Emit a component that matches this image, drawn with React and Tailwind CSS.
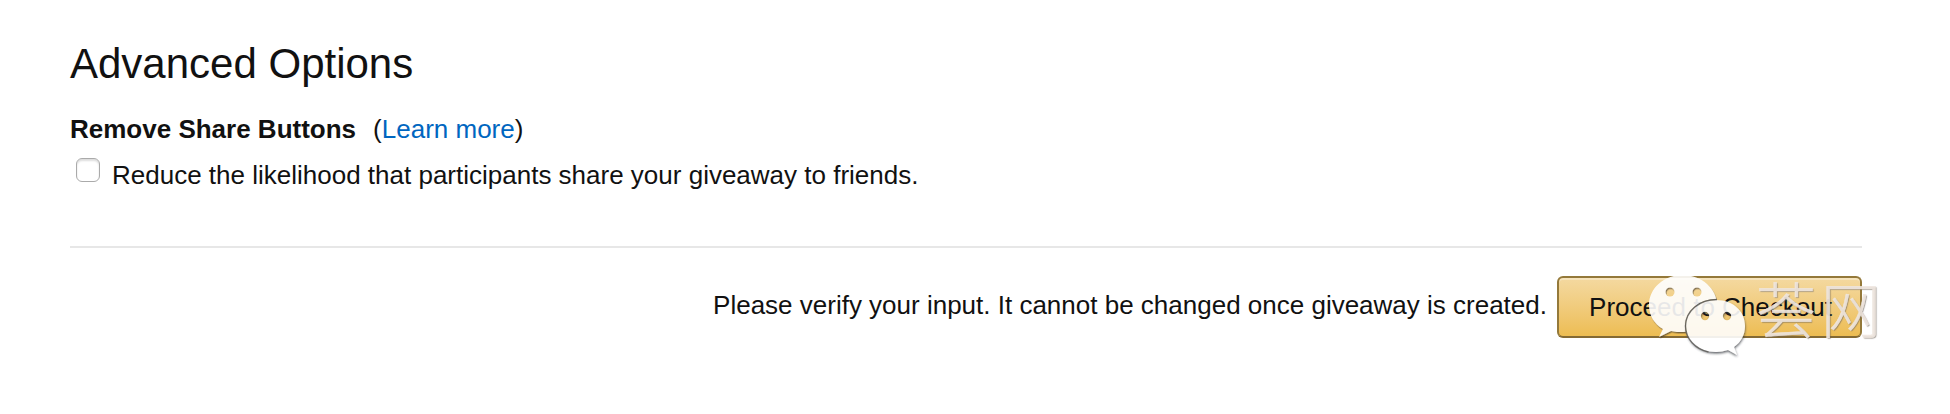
const EYES = [
  { cx: 1670, cy: 292 },
  { cx: 1697, cy: 292 },
  { cx: 1705, cy: 316 },
  { cx: 1727, cy: 316 },
];

function ChatBubbles() {
  return (
    <svg className="block" width="110" height="100" viewBox="1640 265 110 100" fill="none">
      <defs>
        <mask id="back">
          <rect x="1640" y="265" width="110" height="100" fill="white" />
          <circle cx={EYES[0].cx} cy={EYES[0].cy} r="4.5" fill="black" />
          <circle cx={EYES[1].cx} cy={EYES[1].cy} r="4.5" fill="black" />
          <ellipse cx="1715.5" cy="326" rx="30.5" ry="27" fill="black" />
        </mask>
        <mask id="front">
          <rect x="1640" y="265" width="110" height="100" fill="white" />
          <circle cx={EYES[2].cx} cy={EYES[2].cy} r="4.2" fill="black" />
          <circle cx={EYES[3].cx} cy={EYES[3].cy} r="4.2" fill="black" />
        </mask>
        <filter id="edge" x="-20%" y="-20%" width="140%" height="140%">
          <feDropShadow dx="0.8" dy="1.4" stdDeviation="0.7" floodColor="#3b3528" floodOpacity="0.7" />
        </filter>
        <filter id="edgeFront" x="-20%" y="-20%" width="140%" height="140%">
          <feDropShadow dx="0.3" dy="1.6" stdDeviation="0.8" floodColor="#33353c" floodOpacity="0.85" />
        </filter>
      </defs>
      <g filter="url(#edge)" opacity="0.9">
        <path
          mask="url(#back)"
          fill="white"
          d="M1683 275c-19 0-34 13-34 30 0 10 5 19 14 24l-4 8 12-6c4 1 8 1 12 1 19 0 34-11 34-27s-15-30-34-30z"
        />
      </g>
      <g filter="url(#edgeFront)" opacity="0.9">
        <path
          mask="url(#front)"
          fill="white"
          d="M1716 300c-17 0-30 11-30 26s13 26 30 26c4 0 8-1 12-2l9 5-3-8c7-5 11-12 11-21 0-15-12-26-29-26z"
        />
      </g>
      {/* rim where the front bubble overlaps the back one */}
      <path
        d="M1717 299.500c-17 0-31.500 11-31.500 26.500 0 13 10 23 23 26"
        stroke="#5c5b58"
        strokeWidth="1.4"
        strokeOpacity="0.8"
      />
    </svg>
  );
}

function Watermark() {
  return (
    <div className="absolute left-[83px] -top-[11px] flex pointer-events-none">
      <ChatBubbles />
      <span className="ml-[6px] mt-[-3px] text-[60px] leading-[90px] tracking-[5px] font-light text-[#f0e7e0]/90 whitespace-nowrap font-['Noto_Sans_CJK_SC',sans-serif] [-webkit-text-stroke:0.6px_#efe6dfcc] [text-shadow:1px_1px_1px_rgba(110,100,90,0.6)]">
        荟网
      </span>
    </div>
  );
}

export default function App() {
  return (
    <div className="h-[414px] overflow-hidden bg-white pl-[70px] pr-[88px] pt-[37px] text-[26px] text-[#111] font-['Liberation_Sans',Arial,sans-serif]">
      <h2 className="text-[42px] leading-[54px]">Advanced Options</h2>

      <div className="mt-[19px] flex leading-[38px]">
        <span className="font-bold">Remove Share Buttons</span>
        <span className="ml-[17px]">
          (<a href="#" className="text-[#0066c0]">Learn more</a>)
        </span>
      </div>

      <label className="mt-[8px] flex leading-[38px]">
        <input
          type="checkbox"
          className="ml-[6px] mt-[2px] mr-[12px] size-6 shrink-0 appearance-none rounded-[6px] border border-[#aaa] bg-white shadow-[inset_0_2px_2px_#ddd]"
        />
        <span>Reduce the likelihood that participants share your giveaway to friends.</span>
      </label>

      <hr className="mt-[52px] border-0 h-[2px] bg-[#e7e7e7]" />

      <div className="mt-[28px] flex justify-end">
        <span className="mr-[10px] mt-[10px] leading-[38px]">
          Please verify your input. It cannot be changed once giveaway is created.
        </span>
        <div className="relative">
          <button
            type="button"
            className="block h-[62px] w-[305px] rounded-[6px] border-2 border-[#94793a] border-b-[#846a34] bg-linear-to-b from-[#f4d9a0] to-[#edbd52] pl-[2px] shadow-[inset_0_2px_0_rgba(255,255,255,0.3)]"
          >
            Proceed to Checkout
          </button>
          <Watermark />
        </div>
      </div>
    </div>
  );
}
